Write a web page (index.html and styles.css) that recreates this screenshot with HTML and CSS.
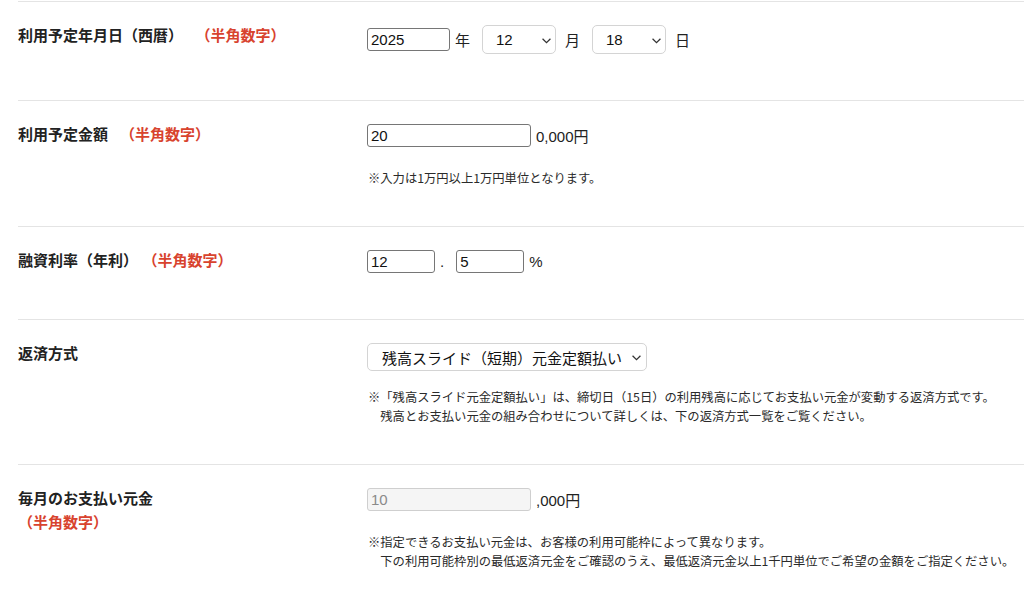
FILE: index.html
```html
<!DOCTYPE html>
<html lang="ja">
  <head>
    <meta charset="utf-8">
    <title>ご利用シミュレーション</title>
    <link rel="stylesheet" href="styles.css">
  </head>
  <body>

    <section class="form">

      <!-- 利用予定年月日 -->
      <div class="row">
        <p class="label">利用予定年月日（西暦）<span class="hint wide-gap">（半角数字）</span></p>
        <div class="field">
          <div class="controls">
            <input class="text-input year" type="text" value="2025">
            <span class="unit">年</span>
            <div class="select small">
              <select><option>12</option></select>
              <svg viewBox="0 0 8 5"><path d="M0.5 0.5 L4 4 L7.5 0.5"/></svg>
            </div>
            <span class="unit">月</span>
            <div class="select small">
              <select><option>18</option></select>
              <svg viewBox="0 0 8 5"><path d="M0.5 0.5 L4 4 L7.5 0.5"/></svg>
            </div>
            <span class="unit">日</span>
          </div>
        </div>
      </div>

      <!-- 利用予定金額 -->
      <div class="row">
        <p class="label">利用予定金額<span class="hint">（半角数字）</span></p>
        <div class="field">
          <div class="controls">
            <input class="text-input amount" type="text" value="20">
            <span class="unit num">0,000円</span>
          </div>
          <p class="note">※入力は1万円以上1万円単位となります。</p>
        </div>
      </div>

      <!-- 融資利率 -->
      <div class="row">
        <p class="label">融資利率（年利）<span class="hint">（半角数字）</span></p>
        <div class="field">
          <div class="controls">
            <input class="text-input rate" type="text" value="12">
            <span class="unit num">.</span>
            <input class="text-input rate" type="text" value="5">
            <span class="unit num">%</span>
          </div>
        </div>
      </div>

      <!-- 返済方式 -->
      <div class="row">
        <p class="label">返済方式</p>
        <div class="field">
          <div class="controls">
            <div class="select wide">
              <select><option>残高スライド（短期）元金定額払い</option></select>
              <svg viewBox="0 0 8 5"><path d="M0.5 0.5 L4 4 L7.5 0.5"/></svg>
            </div>
          </div>
          <p class="note tight">※「残高スライド元金定額払い」は、締切日（15日）の利用残高に応じてお支払い元金が変動する返済方式です。<br><span class="indent">残高とお支払い元金の組み合わせについて詳しくは、下の返済方式一覧をご覧ください。</span></p>
        </div>
      </div>

      <!-- 毎月のお支払い元金 -->
      <div class="row">
        <p class="label">毎月のお支払い元金<span class="hint block">（半角数字）</span></p>
        <div class="field">
          <div class="controls">
            <input class="text-input amount" type="text" value="10" disabled>
            <span class="unit num">,000円</span>
          </div>
          <p class="note">※指定できるお支払い元金は、お客様の利用可能枠によって異なります。<br><span class="indent">下の利用可能枠別の最低返済元金をご確認のうえ、最低返済元金以上1千円単位でご希望の金額をご指定ください。</span></p>
        </div>
      </div>

    </section>

  </body>
</html>
```

FILE: styles.css
```css
/* General styles */

html {
  background-color: white;
  font-family: "Noto Sans CJK JP", sans-serif;
  color: #222;
}

body {
  margin: 0;
}

* {
  box-sizing: border-box;
}

p {
  margin: 0;
}

/* Form layout */

.form {
  padding: 1px 0 0 18px;
}

.row {
  display: grid;
  grid-template-columns: 349px 1fr;
  border-top: 1px solid #e4e4e4;
  padding: 23px 0 46px;
}

.label {
  font-size: 15px;
  font-weight: bold;
  line-height: 18px;
  padding-top: 1px;
}

.hint {
  color: #d8432e;
  margin-left: 12px;
}

.hint.wide-gap {
  margin-left: 20px;
}

.hint.block {
  display: block;
  margin: 6px 0 0;
}

.controls {
  display: flex;
  align-items: center;
}

.unit {
  font-size: 15px;
  margin: 0 12px 0 5px;
}

.unit.num {
  font-family: "Liberation Sans", "Noto Sans CJK JP", sans-serif;
}

/* Inputs */

.text-input {
  height: 23px;
  padding: 0 3px;
  border: 1px solid #767676;
  border-radius: 3px;
  font-family: "Liberation Sans", sans-serif;
  font-size: 15px;
  color: #111;
  background-color: white;
}

.text-input:disabled {
  background-color: #f5f5f5;
  border-color: #cfcfcf;
  color: #8a8a8a;
}

.year {
  width: 83px;
}

.amount {
  width: 164px;
}

.rate {
  width: 68px;
}

/* Select boxes */

.select {
  position: relative;
  flex: none;
  margin-right: 4px;
}

.select select {
  appearance: none;
  -webkit-appearance: none;
  display: block;
  border: 1px solid #d4d4d4;
  border-radius: 5px;
  background-color: white;
  color: #111;
  font-size: 15px;
  cursor: pointer;
}

.select svg {
  position: absolute;
  top: 50%;
  width: 9px;
  height: 6px;
  margin-top: -2px;
  fill: none;
  stroke: #333;
  stroke-width: 1.1;
  pointer-events: none;
}

.small select {
  width: 74px;
  min-width: 74px;
  height: 29px;
  padding: 0 0 0 13px;
  font-family: "Liberation Sans", sans-serif;
}

.small svg {
  right: 5px;
}

.wide select {
  width: 280px;
  height: 28px;
  padding: 0 0 0 14px;
  font-family: "Noto Sans CJK JP", sans-serif;
}

.wide svg {
  right: 6px;
}

/* Notes */

.note {
  font-size: 12.3px;
  line-height: 19px;
  color: #2a2a2a;
  margin: 22px 0 -8px 1px;
}

.note.tight {
  margin-top: 17px;
}

.indent {
  padding-left: 1em;
}
```
